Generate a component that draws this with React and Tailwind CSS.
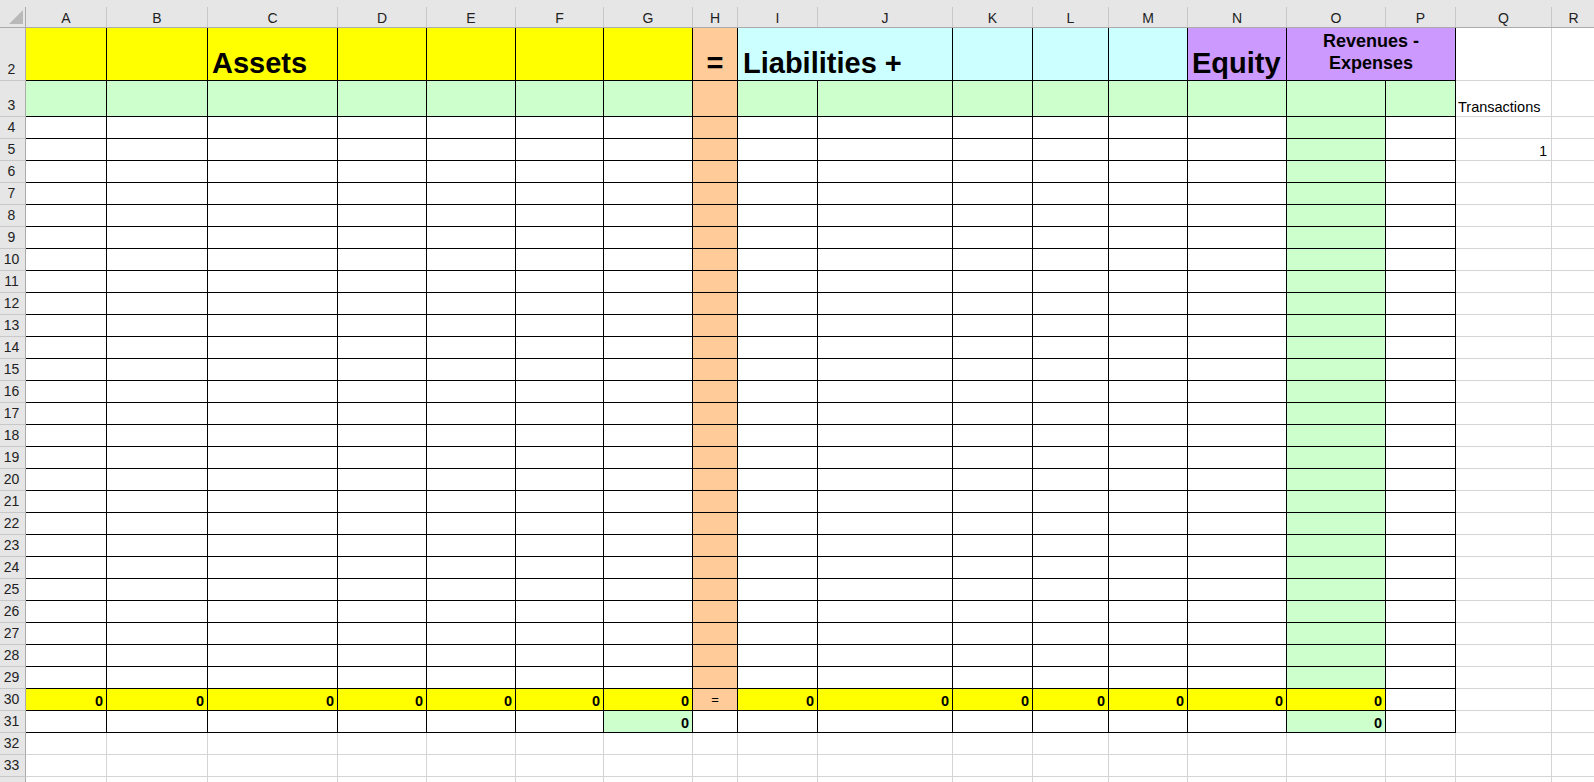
import React from "react";

const COLS = [
  { k: "A", w: "w-[81px]" },
  { k: "B", w: "w-[101px]" },
  { k: "C", w: "w-[130px]" },
  { k: "D", w: "w-[89px]" },
  { k: "E", w: "w-[89px]" },
  { k: "F", w: "w-[88px]" },
  { k: "G", w: "w-[89px]" },
  { k: "H", w: "w-[45px]" },
  { k: "I", w: "w-[80px]" },
  { k: "J", w: "w-[135px]" },
  { k: "K", w: "w-[80px]" },
  { k: "L", w: "w-[76px]" },
  { k: "M", w: "w-[79px]" },
  { k: "N", w: "w-[99px]" },
  { k: "O", w: "w-[99px]" },
  { k: "P", w: "w-[70px]" },
  { k: "Q", w: "w-[96px]" },
  { k: "R", w: "w-[44px]" },
];

const FILL = {
  y: "bg-[#ffff00]",
  g: "bg-[#ccffcc]",
  o: "bg-[#ffcc99]",
  c: "bg-[#ccffff]",
  p: "bg-[#cc99ff]",
  w: "bg-white",
};

const W = Object.fromEntries(COLS.map((c) => [c.k, c.w]));

function Cell({ w, fill = "w", boxed, className = "", children }) {
  return (
    <div
      className={`${w} shrink-0 h-full flex overflow-hidden ${FILL[fill]} border-r border-b ${
        boxed ? "border-black" : "border-[#d4d4d4]"
      } ${className}`}
    >
      {children}
    </div>
  );
}

function Row({ n, h, children }) {
  return (
    <div className={`flex ${h}`}>
      <div className="w-[26px] shrink-0 flex items-end justify-center pb-[3px] pr-[2px] bg-[#e6e6e6] border-r border-b border-r-[#ababab] border-b-[#c8c8c8] text-[14px] leading-[16px] text-[#222]">
        {n}
      </div>
      {children}
    </div>
  );
}

const big = "items-end pb-[1px] text-[29px] leading-[32px] font-bold";
const num = "items-end justify-end pb-[1px] pr-[3px] text-[14.5px] leading-[16px] font-bold";

function bodyCell(r, k) {
  const inTable = r <= 31 && k !== "Q" && k !== "R";
  let fill = "w";
  let text = null;
  let cls = "";
  const sumCols = "ABCDEFGIJKLMNO";

  if (k === "H" && r <= 30) fill = "o";
  if (k === "O" && r <= 29) fill = "g";
  if (r === 30 && sumCols.includes(k)) {
    fill = "y";
    text = "0";
    cls = num;
  }
  if (r === 30 && k === "H") {
    text = "=";
    cls = "items-end justify-center pb-[2px] text-[13px] leading-[16px]";
  }
  if (r === 31 && (k === "G" || k === "O")) {
    fill = "g";
    text = "0";
    cls = num;
  }
  if (r === 5 && k === "Q") {
    text = "1";
    cls = "items-end justify-end pb-[1px] pr-[4px] text-[14px] leading-[16px]";
  }
  return (
    <Cell key={k} w={W[k]} fill={fill} boxed={inTable} className={cls}>
      {text}
    </Cell>
  );
}

export default function App() {
  const rows = [];
  for (let r = 4; r <= 34; r++) rows.push(r);

  return (
    <div className="w-[1594px] h-[782px] overflow-hidden bg-white text-black font-['Liberation_Sans',Arial,sans-serif]">
      {/* column headers */}
      <div className="h-[28px] bg-[#e6e6e6] pt-[7px]">
        <div className="flex h-[21px] border-b border-[#ababab]">
          <div className="w-[26px] shrink-0 border-r border-[#ababab] relative">
            <svg className="absolute left-[9px] top-[3px]" width="14" height="14" viewBox="0 0 14 14">
              <polygon points="14,0 14,14 0,14" fill="#b9b9b9" />
            </svg>
          </div>
          {COLS.map((c) => (
            <div
              key={c.k}
              className={`${c.w} shrink-0 flex items-center justify-center border-r border-[#c8c8c8] text-[14px] leading-[16px] text-[#222] pt-[1px]`}
            >
              {c.k}
            </div>
          ))}
        </div>
      </div>

      {/* row 2 */}
      <Row n="2" h="h-[53px]">
        <Cell w={W.A} fill="y" boxed />
        <Cell w={W.B} fill="y" boxed />
        <Cell w={W.C} fill="y" boxed className={`${big} pl-[4px]`}>Assets</Cell>
        <Cell w={W.D} fill="y" boxed />
        <Cell w={W.E} fill="y" boxed />
        <Cell w={W.F} fill="y" boxed />
        <Cell w={W.G} fill="y" boxed />
        <Cell w={W.H} fill="o" boxed className={`${big} justify-center`}>=</Cell>
        <Cell w="w-[215px]" fill="c" boxed className={`${big} pl-[5px] whitespace-nowrap`}>
          Liabilities +
        </Cell>
        <Cell w={W.K} fill="c" boxed />
        <Cell w={W.L} fill="c" boxed />
        <Cell w={W.M} fill="c" boxed />
        <Cell w={W.N} fill="p" boxed className={`${big} pl-[4px]`}>Equity</Cell>
        <Cell w="w-[169px]" fill="p" boxed className="flex-col items-center pt-[2px] text-[18px] leading-[22px] font-bold">
          <span>Revenues -</span>
          <span>Expenses</span>
        </Cell>
        <Cell w={W.Q} />
        <Cell w={W.R} />
      </Row>

      {/* row 3 */}
      <Row n="3" h="h-[36px]">
        {COLS.map((c) => {
          if (c.k === "Q")
            return (
              <Cell key={c.k} w={c.w} className="items-end pb-[1px] pl-[2px] text-[14.5px] leading-[16px] whitespace-nowrap">
                Transactions
              </Cell>
            );
          if (c.k === "R") return <Cell key={c.k} w={c.w} />;
          return <Cell key={c.k} w={c.w} fill={c.k === "H" ? "o" : "g"} boxed />;
        })}
      </Row>

      {/* rows 4 - 34 (34 is only partly in view) */}
      {rows.map((r) => (
        <Row key={r} n={r === 34 ? "" : r} h="h-[22px]">
          {COLS.map((c) => bodyCell(r, c.k))}
        </Row>
      ))}
    </div>
  );
}
